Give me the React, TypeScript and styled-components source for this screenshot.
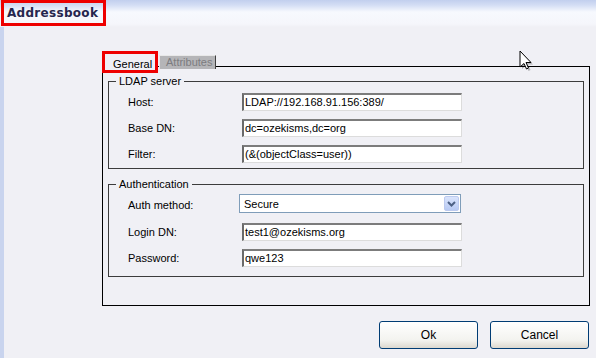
import styled, { createGlobalStyle } from "styled-components";

const GlobalStyle = createGlobalStyle`
  body {
    margin: 0;
    background: #f0f0f5;
    font-family: "Liberation Sans", Arial, sans-serif;
  }
`;

const Page = styled.div`
  position: relative;
  width: 596px;
  height: 358px;
  overflow: hidden;
  background: #f0f0f5;
  display: flex;
  flex-direction: column;
`;

const Header = styled.div`
  flex: none;
  height: 27px;
  background: linear-gradient(
    #c2cfee 0px,
    #d3ddf4 5px,
    #f7f9fe 12px,
    #f5f6fb 24px,
    #f0f0f5 27px
  );
  display: flex;
  align-items: flex-start;
`;

const TitleBox = styled.div`
  margin-left: 1px;
  width: 105px;
  height: 26px;
  box-sizing: border-box;
  border: 3px solid #ee0000;
  padding-left: 3px;
  font: bold 12px "DejaVu Sans", Verdana, sans-serif;
  letter-spacing: 0.3px;
  line-height: 20px;
  color: #26264e;
`;

const Body = styled.div`
  flex: 1;
  border-left: 4px solid #c9d4ee;
  padding: 24px 0 0 98px;
`;

const TabStrip = styled.div`
  display: flex;
  align-items: flex-end;
  height: 15px;
`;

const Tab = styled.div<{ $active?: boolean }>`
  position: relative;
  z-index: 1;
  box-sizing: border-box;
  font-size: 11px;
  ${(p) =>
    p.$active
      ? `
    width: 56px;
    height: 22px;
    margin-bottom: -7px;
    border: 3px solid #ee0000;
    background: #f0f0f5;
    color: #000;
    padding: 4px 0 0 8px;
    line-height: 13px;
  `
      : `
    width: 57px;
    height: 14px;
    margin-left: 1px;
    margin-bottom: -3px;
    background: #b5b5b8;
    border-top: 1px solid #e8e8e8;
    border-left: 1px solid #e8e8e8;
    border-right: 1px solid #404040;
    color: #7c7c80;
    padding-left: 6px;
    line-height: 12px;
  `}
`;

const Panel = styled.div`
  box-sizing: border-box;
  width: 488px;
  height: 240px;
  border: 1px solid #000;
  padding: 14px 5px 0 5px;
`;

const Group = styled.div<{ $bottom: number; $gap?: number }>`
  margin-top: ${(p) => p.$gap ?? 0}px;
  width: 476px;
  box-sizing: border-box;
  border: 1px solid #3c3c3c;
  padding: 0 0 ${(p) => p.$bottom}px 19px;
`;

const Caption = styled.div`
  width: fit-content;
  margin: -7px 0 0 -12px;
  padding: 0 3px;
  background: #f0f0f5;
  font-size: 11px;
  line-height: 13px;
  color: #000;
`;

const Rows = styled.div<{ $top: number }>`
  display: grid;
  grid-template-columns: 114px 220px;
  row-gap: 8px;
  align-items: center;
  padding-top: ${(p) => p.$top}px;
`;

const Label = styled.span`
  font-size: 11px;
  color: #000;
`;

const TextBox = styled.div`
  box-sizing: border-box;
  height: 18px;
  background: #fff;
  border-top: 2px solid #7c7c7c;
  border-left: 2px solid #6a6a6a;
  border-right: 1px solid #dcdcdc;
  border-bottom: 1px solid #dcdcdc;
  padding-left: 1px;
  font-size: 11px;
  line-height: 15px;
  color: #000;
  white-space: nowrap;
`;

const SelectBox = styled.div`
  box-sizing: border-box;
  margin-left: -3px;
  margin-bottom: 2px;
  width: 222px;
  height: 19px;
  background: #fff;
  border: 1px solid #7f9db9;
  display: flex;
  align-items: center;
  justify-content: space-between;
  padding: 0 1px 0 4px;
  font-size: 11px;
  color: #000;
`;

const DropButton = styled.div`
  box-sizing: border-box;
  width: 15px;
  height: 15px;
  border: 1px solid #bccaef;
  border-radius: 2px;
  background: linear-gradient(#dae4fc, #b8caf4);
  display: flex;
  align-items: center;
  justify-content: center;
`;

const ButtonRow = styled.div`
  width: 488px;
  margin-top: 15px;
  display: flex;
  justify-content: flex-end;
  gap: 12px;
  padding-right: 1px;
  box-sizing: border-box;
`;

const Button = styled.button`
  width: 99px;
  height: 28px;
  border: 1px solid #003c74;
  border-radius: 3px;
  background: linear-gradient(#ffffff, #f3f3ef 70%, #dcd8cf);
  font-family: "Liberation Sans", Arial, sans-serif;
  font-size: 12px;
  color: #000;
  padding: 0;
`;

const Cursor = styled.svg`
  position: absolute;
  left: 519px;
  top: 50px;
`;

const ldapRows = [
  { label: "Host:", value: "LDAP://192.168.91.156:389/" },
  { label: "Base DN:", value: "dc=ozekisms,dc=org" },
  { label: "Filter:", value: "(&(objectClass=user))" },
];

export default function App() {
  return (
    <Page>
      <GlobalStyle />
      <Header>
        <TitleBox>Addressbook</TitleBox>
      </Header>
      <Body>
        <TabStrip>
          <Tab $active>General</Tab>
          <Tab>Attributes</Tab>
        </TabStrip>
        <Panel>
          <Group $bottom={5}>
            <Caption>LDAP server</Caption>
            <Rows $top={5}>
              {ldapRows.flatMap((r) => [
                <Label key={r.label}>{r.label}</Label>,
                <TextBox key={r.value}>{r.value}</TextBox>,
              ])}
            </Rows>
          </Group>
          <Group $bottom={9} $gap={15}>
            <Caption>Authentication</Caption>
            <Rows $top={3}>
              <Label>Auth method:</Label>
              <SelectBox>
                Secure
                <DropButton>
                  <svg width="9" height="6" viewBox="0 0 9 6">
                    <path d="M1 1 L4.5 4.5 L8 1" fill="none" stroke="#4d6185" strokeWidth="2" />
                  </svg>
                </DropButton>
              </SelectBox>
              <Label>Login DN:</Label>
              <TextBox>test1@ozekisms.org</TextBox>
              <Label>Password:</Label>
              <TextBox>qwe123</TextBox>
            </Rows>
          </Group>
        </Panel>
        <ButtonRow>
          <Button>Ok</Button>
          <Button>Cancel</Button>
        </ButtonRow>
      </Body>
      <Cursor width="14" height="22" viewBox="0 0 14 22">
        <path d="M3 3 L3 19 L7 15.5 L9.5 21 L11.5 20 L9 14.5 L14 14.5 Z" fill="#000" opacity="0.25" />
        <path d="M1 1 L1 17 L5 13.5 L7.5 19 L9.5 18 L7 12.5 L12 12.5 Z" fill="#fff" stroke="#000" strokeWidth="1" />
      </Cursor>
    </Page>
  );
}
